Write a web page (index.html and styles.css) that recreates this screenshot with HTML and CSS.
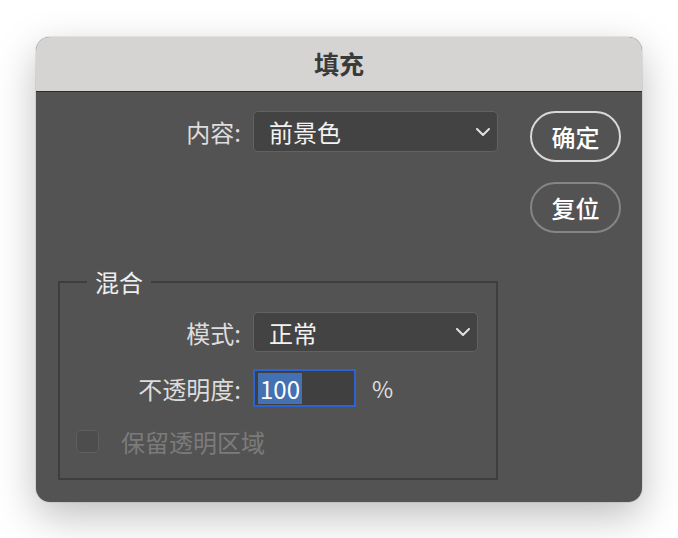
FILE: index.html
```html
<!DOCTYPE html>
<html lang="zh-CN">
<head>
<meta charset="utf-8">
<title>填充</title>
<link rel="stylesheet" href="styles.css">
</head>
<body>
<div class="window">
  <div class="titlebar">填充</div>
  <div class="content">
    <div class="main">
      <div class="row">
        <span class="label label-top">内容:</span>
        <div class="select select-wide">
          <span>前景色</span>
          <svg class="chev" width="14" height="8" viewBox="0 0 14 8"><path d="M1 1 L7 7 L13 1" fill="none" stroke="#e0e0e0" stroke-width="2" stroke-linecap="round" stroke-linejoin="round"/></svg>
        </div>
      </div>
      <fieldset class="group">
        <legend class="legend">混合</legend>
        <div class="row">
          <span class="label label-group">模式:</span>
          <div class="select select-mode">
            <span>正常</span>
            <svg class="chev" width="14" height="8" viewBox="0 0 14 8"><path d="M1 1 L7 7 L13 1" fill="none" stroke="#e0e0e0" stroke-width="2" stroke-linecap="round" stroke-linejoin="round"/></svg>
          </div>
        </div>
        <div class="row row-opacity">
          <span class="label label-group">不透明度:</span>
          <div class="field"><span class="sel">100</span></div>
          <span class="unit">%</span>
        </div>
        <div class="check">
          <span class="box"></span>
          <span class="check-text">保留透明区域</span>
        </div>
      </fieldset>
    </div>
    <div class="buttons">
      <div class="btn btn-primary">确定</div>
      <div class="btn btn-secondary">复位</div>
    </div>
  </div>
</div>
</body>
</html>
```
FILE: styles.css
```css
html, body {
  margin: 0;
  background: #ffffff;
}
body {
  box-sizing: border-box;
  min-height: 538px;
  padding: 37px 0 0 36px;
  font-family: "Noto Sans CJK SC", "Noto Sans", sans-serif;
}
.window {
  width: 606px;
  height: 465px;
  border-radius: 14px;
  overflow: hidden;
  background: #535353;
  box-shadow: 0 14px 40px rgba(0, 0, 0, 0.26), 0 0 0 1px rgba(0, 0, 0, 0.07);
  display: flex;
  flex-direction: column;
}
.titlebar {
  height: 55px;
  box-sizing: border-box;
  background: #d6d4d2;
  border-bottom: 1px solid #2c2c2c;
  display: flex;
  align-items: center;
  justify-content: center;
  padding-bottom: 3px;
  font-size: 25px;
  font-weight: 700;
  color: #3a3a3a;
}
.content {
  display: flex;
  gap: 32px;
  padding: 19px 21px 0 22px;
}
.main {
  width: 440px;
  display: flex;
  flex-direction: column;
}
.row {
  display: flex;
  align-items: center;
  gap: 12px;
}
.label {
  color: #dddddd;
  font-size: 24px;
  text-align: right;
  white-space: nowrap;
}
.label-top {
  width: 183px;
}
.label-group {
  width: 181px;
}
.select {
  box-sizing: border-box;
  background: #434343;
  border: 1px solid #626262;
  border-radius: 5px;
  display: flex;
  align-items: center;
  justify-content: space-between;
  padding: 0 7px 0 15px;
  color: #f2f2f2;
  font-size: 24px;
}
.select-wide {
  width: 245px;
  height: 41px;
}
.select-mode {
  width: 225px;
  height: 40px;
}
.chev {
  display: block;
}
.group {
  margin: 116px 0 0 0;
  border: 2px solid #3e3e3e;
  padding: 16px 0 25px 0;
  min-width: 0;
}
.legend {
  margin-left: 27px;
  padding: 0 8px;
  font-size: 24px;
  line-height: 28px;
  color: #eeeeee;
}
.row-opacity {
  margin-top: 17px;
}
.field {
  width: 103px;
  height: 38px;
  box-sizing: border-box;
  border: 2px solid #2c62d2;
  background: #404040;
  padding: 1px 3px;
  display: flex;
  align-items: center;
}
.sel {
  background: #4471b1;
  color: #ffffff;
  font-size: 24px;
  height: 31px;
  line-height: 31px;
  padding: 0 2px;
}
.unit {
  margin-left: 4px;
  color: #dddddd;
  font-size: 23px;
}
.check {
  margin: 23px 0 0 16px;
  display: flex;
  align-items: center;
  gap: 22px;
  height: 23px;
}
.box {
  width: 23px;
  height: 23px;
  box-sizing: border-box;
  border: 1.5px solid #5f5f5f;
  background: #4d4d4d;
  border-radius: 5px;
}
.check-text {
  color: #7b7b7b;
  font-size: 24px;
  line-height: 23px;
}
.buttons {
  width: 91px;
  display: flex;
  flex-direction: column;
  gap: 20px;
}
.btn {
  height: 51px;
  box-sizing: border-box;
  border-radius: 26px;
  display: flex;
  align-items: center;
  justify-content: center;
  color: #ffffff;
  font-size: 24px;
  font-weight: 500;
}
.btn-primary {
  border: 2px solid #d8d8d8;
}
.btn-secondary {
  border: 2px solid #858585;
}
```
